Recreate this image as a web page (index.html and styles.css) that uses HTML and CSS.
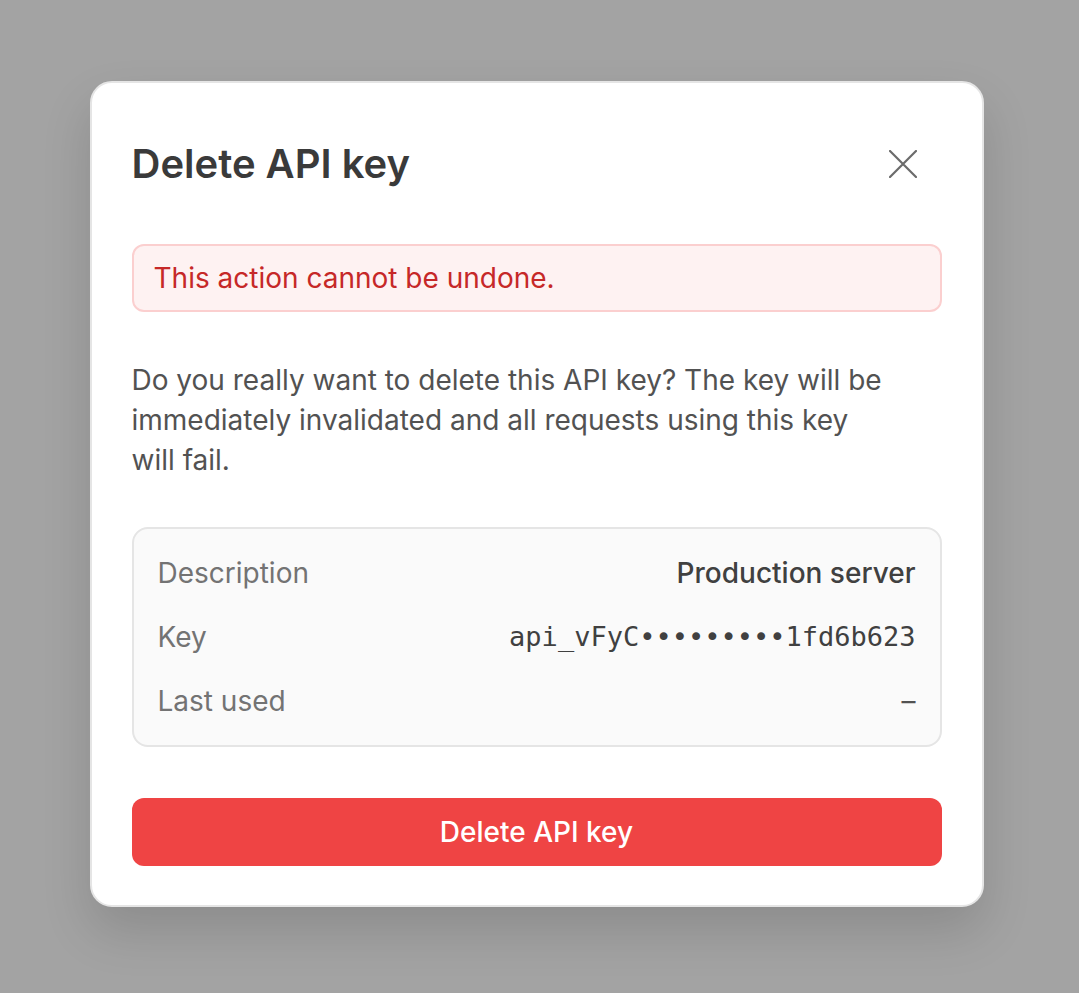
FILE: index.html
```html
<!DOCTYPE html>
<html lang="en">
<head>
    <meta charset="UTF-8">
    <meta name="viewport" content="width=device-width, initial-scale=1.0">
    <title>Delete API key</title>
    <link rel="stylesheet" href="styles.css">
</head>
<body>
    <div class="modal" role="dialog" aria-labelledby="modalTitle">
        <div class="modal-header">
            <h2 id="modalTitle">Delete API key</h2>
            <button class="close-btn" aria-label="Close">
                <svg width="28" height="28" viewBox="0 0 28 28" fill="none" stroke="currentColor" stroke-width="2.2" stroke-linecap="round">
                    <path d="M1 1L27 27M27 1L1 27"/>
                </svg>
            </button>
        </div>

        <div class="alert">This action cannot be undone.</div>

        <p class="message">Do you really want to delete this API key? The key will be immediately invalidated and all requests using this key will fail.</p>

        <div class="details">
            <div class="detail-row">
                <span class="label">Description</span>
                <span class="value">Production server</span>
            </div>
            <div class="detail-row">
                <span class="label">Key</span>
                <span class="value mono">api_vFyC•••••••••1fd6b623</span>
            </div>
            <div class="detail-row">
                <span class="label">Last used</span>
                <span class="value empty">–</span>
            </div>
        </div>

        <button class="delete-btn">Delete API key</button>
    </div>
</body>
</html>
```

FILE: styles.css
```css
* {
    margin: 0;
    padding: 0;
    box-sizing: border-box;
}

body {
    font-family: 'Inter', 'Noto Sans', sans-serif;
    background-color: #a3a3a3;
    color: #404040;
    display: flex;
    justify-content: center;
    align-items: center;
    min-height: 100vh;
}

.modal {
    width: 894px;
    margin: 0 6px 6px 0;
    background: #ffffff;
    border: 2px solid #e5e5e5;
    border-radius: 22px;
    padding: 41px 40px 39px;
    display: flex;
    flex-direction: column;
    box-shadow: 0 24px 50px rgba(0, 0, 0, 0.14);
}

.modal-header {
    height: 80px;
    display: flex;
    align-items: center;
    justify-content: space-between;
}

.modal-header h2 {
    font-size: 40px;
    font-weight: 600;
    line-height: 48px;
    color: #3a3a3a;
}

.close-btn {
    background: none;
    border: none;
    color: #6b6b6b;
    width: 28px;
    height: 28px;
    margin-right: 25px;
    cursor: pointer;
    display: flex;
}

.alert {
    margin-top: 40px;
    background: #fef2f2;
    border: 2px solid #fbcfcf;
    border-radius: 12px;
    padding: 12px 20px;
    font-size: 28px;
    line-height: 40px;
    color: #c62828;
}

.message {
    margin-top: 48px;
    font-size: 28px;
    line-height: 40px;
    color: #525252;
    text-wrap: pretty;
}

.details {
    margin-top: 47px;
    background: #fafafa;
    border: 2px solid #e5e5e5;
    border-radius: 16px;
    padding: 24px;
    display: flex;
    flex-direction: column;
    gap: 24px;
}

.detail-row {
    display: flex;
    justify-content: space-between;
    align-items: center;
    font-size: 28px;
    line-height: 40px;
}

.label {
    color: #737373;
}

.value {
    color: #404040;
    font-weight: 500;
}

.value.mono {
    font-family: 'DejaVu Sans Mono', monospace;
    font-weight: 400;
    font-size: 27px;
}

.value.empty {
    font-weight: 400;
    color: #525252;
}

.delete-btn {
    margin-top: 51px;
    height: 68px;
    background-color: #ef4444;
    color: #ffffff;
    border: none;
    border-radius: 12px;
    font-family: inherit;
    font-size: 28px;
    font-weight: 500;
    cursor: pointer;
}
```
